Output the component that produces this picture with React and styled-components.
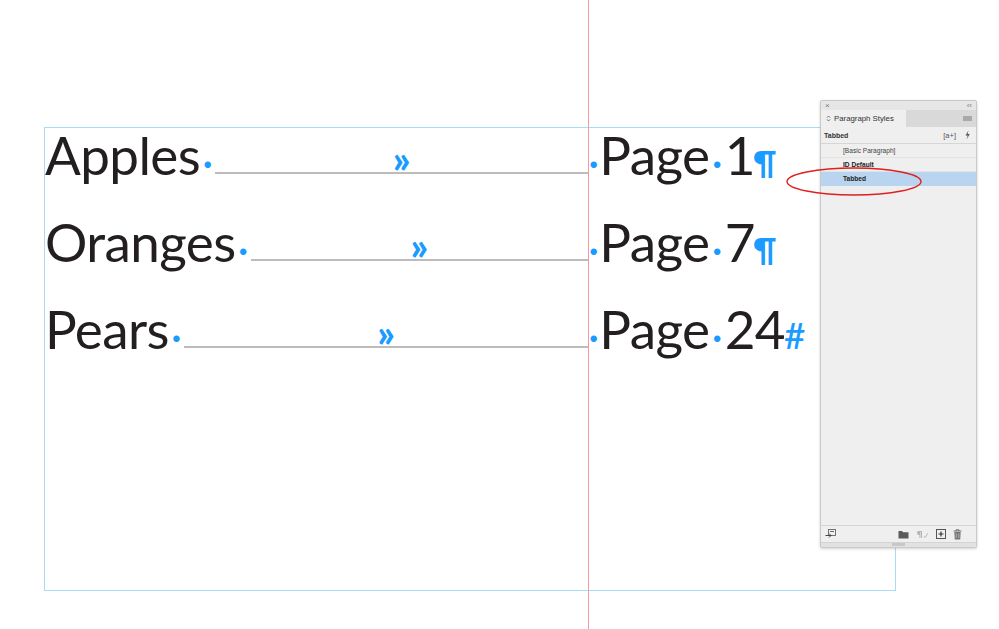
import styled, { createGlobalStyle } from "styled-components";

const GlobalStyle = createGlobalStyle`
  html, body {
    margin: 0;
    padding: 0;
    background: #ffffff;
  }
`;

const colors = {
  ink: "#231f20",
  hidden: "#1a9bff",
  frame: "#a8dcf5",
  guide: "#f39a9a",
  leader: "#bcbcbc",
  panelBg: "#efefef",
  panelLine: "#d6d6d6",
  select: "#b9d4ef",
};

const Canvas = styled.div`
  position: relative;
  width: 999px;
  height: 629px;
  overflow: hidden;
  padding: 127px 0 0 44px;
  box-sizing: border-box;
  font-family: "Lato", "Open Sans", sans-serif;
`;

const TextFrame = styled.div`
  width: 852px;
  height: 464px;
  box-sizing: border-box;
  border: 1px solid ${colors.frame};
`;

const Row = styled.div`
  display: flex;
  align-items: baseline;
  height: 87px;
  line-height: 87px;
  margin-top: ${(p) => (p.$first ? "-17px" : "0")};
  font-size: 53px;
  color: ${colors.ink};
`;

const LeftCell = styled.div`
  width: 543px;
  display: flex;
  align-items: baseline;
`;

const Word = styled.span`
  letter-spacing: -0.6px;
`;

const Space = styled.span`
  color: ${colors.hidden};
  font-weight: 700;
  font-size: 34px;
  padding: 0 ${(p) => (p.$tight ? "1px" : "3px")};
`;

const Leader = styled.span`
  flex: 1;
  height: 2px;
  background: ${colors.leader};
  position: relative;
  transform: translateY(-1px);
`;

const Chevron = styled.span`
  position: absolute;
  left: 50%;
  bottom: 6px;
  transform: translateX(-50%);
  color: ${colors.hidden};
  font-weight: 900;
  font-size: 38px;
  line-height: 20px;
`;

const RightCell = styled.div`
  display: flex;
  align-items: baseline;
`;

const Pilcrow = styled.span`
  color: ${colors.hidden};
  font-weight: 700;
  font-size: 32px;
  margin-left: -2px;
`;

const StoryEnd = styled.span`
  color: ${colors.hidden};
  font-weight: 500;
  font-size: 37px;
  margin-left: -1px;
`;

const Guide = styled.div`
  position: absolute;
  left: 588px;
  top: 0;
  width: 1px;
  height: 629px;
  background: ${colors.guide};
`;

/* Paragraph Styles panel */
const Panel = styled.div`
  position: absolute;
  left: 820px;
  top: 100px;
  width: 157px;
  height: 448px;
  box-sizing: border-box;
  border: 1px solid #c9c9c9;
  border-radius: 2px;
  box-shadow: 0 1px 3px rgba(0, 0, 0, 0.18);
  background: ${colors.panelBg};
  display: flex;
  flex-direction: column;
  font-family: "Liberation Sans", Arial, sans-serif;
  color: #333;
  overflow: hidden;
`;

const TitleBar = styled.div`
  height: 9px;
  background: #e6e6e6;
  display: flex;
  align-items: center;
  justify-content: space-between;
  padding: 0 4px;
  font-size: 8px;
  color: #777;
`;

const TabRow = styled.div`
  height: 17px;
  background: #d9d9d9;
  display: flex;
  align-items: stretch;
  justify-content: space-between;
`;

const Tab = styled.div`
  width: 80px;
  background: ${colors.panelBg};
  display: flex;
  align-items: center;
  gap: 3px;
  padding-left: 5px;
  font-size: 7.8px;
  color: #333;
`;

const MenuIcon = styled.div`
  width: 9px;
  height: 5px;
  background: #a9a9a9;
  align-self: center;
  margin-right: 4px;
`;

const StyleHeader = styled.div`
  height: 16px;
  display: flex;
  align-items: center;
  justify-content: space-between;
  padding: 0 3px;
  border-bottom: 1px solid ${colors.panelLine};
  font-size: 7px;
  font-weight: 700;
  color: #333;
`;

const HeaderTools = styled.div`
  display: flex;
  align-items: center;
  gap: 8px;
  font-weight: 400;
  font-size: 7.5px;
  color: #555;
  padding-right: 2px;
`;

const List = styled.div`
  flex: 1;
  display: flex;
  flex-direction: column;
`;

const Item = styled.div`
  height: 14px;
  box-sizing: border-box;
  display: flex;
  align-items: center;
  padding-left: 22px;
  font-size: 6.6px;
  font-weight: ${(p) => (p.$bold ? 700 : 400)};
  color: ${(p) => (p.$bold ? "#222" : "#444")};
  background: ${(p) => (p.$selected ? colors.select : "transparent")};
  border-bottom: 1px solid ${(p) => (p.$selected ? "transparent" : "#e4e4e4")};
`;

const Footer = styled.div`
  height: 16px;
  border-top: 1px solid ${colors.panelLine};
  display: flex;
  align-items: center;
  padding: 0 14px 0 4px;
  gap: 7px;
`;

const FooterSpacer = styled.div`
  flex: 1;
`;

const Grip = styled.div`
  height: 4px;
  background: #e2e2e2;
  border-top: 1px solid #d4d4d4;
  display: flex;
  justify-content: center;
`;

const GripHandle = styled.div`
  width: 13px;
  height: 3px;
  background: #c8c8c8;
`;

const Marker = styled.svg`
  position: absolute;
  left: 785px;
  top: 166px;
  overflow: visible;
`;

const Ico = ({ children, w = 10, h = 10 }) => (
  <svg width={w} height={h} viewBox={`0 0 ${w} ${h}`}>
    {children}
  </svg>
);

const rows = [
  { word: "Apples", page: "1", end: "pilcrow" },
  { word: "Oranges", page: "7", end: "pilcrow" },
  { word: "Pears", page: "24", end: "story" },
];

export default function App() {
  return (
    <>
      <GlobalStyle />
      <Canvas>
        <TextFrame>
          {rows.map((r, i) => (
            <Row key={r.word} $first={i === 0}>
              <LeftCell>
                <Word>{r.word}</Word>
                <Space>·</Space>
                <Leader>
                  <Chevron>»</Chevron>
                </Leader>
              </LeftCell>
              <RightCell>
                <Space $tight>·</Space>
                <Word>Page</Word>
                <Space>·</Space>
                <Word>{r.page}</Word>
                {r.end === "pilcrow" ? <Pilcrow>¶</Pilcrow> : <StoryEnd>#</StoryEnd>}
              </RightCell>
            </Row>
          ))}
        </TextFrame>
        <Guide />

        <Panel>
          <TitleBar>
            <span>×</span>
            <span>‹‹</span>
          </TitleBar>
          <TabRow>
            <Tab>
              <Ico w={5} h={7}>
                <path d="M1 2.6 L2.5 1 L4 2.6 M1 4.4 L2.5 6 L4 4.4" fill="none" stroke="#555" strokeWidth="0.8" />
              </Ico>
              Paragraph Styles
            </Tab>
            <MenuIcon />
          </TabRow>
          <StyleHeader>
            <span>Tabbed</span>
            <HeaderTools>
              <span>[a+]</span>
              <Ico w={7} h={10}>
                <path d="M4.5 0.5 L1.5 5.5 L3.8 5.5 L2.5 9.5 L5.8 4 L3.6 4 Z" fill="#555" />
              </Ico>
            </HeaderTools>
          </StyleHeader>
          <List>
            <Item>[Basic Paragraph]</Item>
            <Item $bold>ID Default</Item>
            <Item $bold $selected>Tabbed</Item>
          </List>
          <Footer>
            <Ico w={11} h={10}>
              <rect x="3.5" y="0.5" width="7" height="6" fill="none" stroke="#666" strokeWidth="0.9" />
              <path d="M0.5 6.5 L6 6.5 M4 4.5 L6 6.5 L4 8.5" fill="none" stroke="#444" strokeWidth="1" />
              <rect x="5" y="2" width="4" height="1" fill="#666" />
            </Ico>
            <FooterSpacer />
            <Ico w={11} h={9}>
              <path d="M0.5 1 L4 1 L5 2.2 L10.5 2.2 L10.5 8.5 L0.5 8.5 Z" fill="#5a5a5a" />
            </Ico>
            <Ico w={13} h={9}>
              <path d="M2 1 L6 1 L6 8 L5 8 L5 2 L4.4 2 L4.4 8 L3.4 8 L3.4 5 C1.6 5 1 4 1 3 C1 2 1.6 1 2 1 Z" fill="#b5b5b5" />
              <path d="M8 6 L9.2 7.5 L12 3" fill="none" stroke="#b5b5b5" strokeWidth="0.9" />
            </Ico>
            <Ico w={10} h={10}>
              <rect x="0.5" y="0.5" width="9" height="9" fill="none" stroke="#555" strokeWidth="1" />
              <path d="M5 2.5 L5 7.5 M2.5 5 L7.5 5" stroke="#333" strokeWidth="1.2" />
            </Ico>
            <Ico w={9} h={11}>
              <path d="M0.5 2 L8.5 2 M3 2 L3 0.8 L6 0.8 L6 2" fill="none" stroke="#666" strokeWidth="0.9" />
              <path d="M1.3 3 L7.7 3 L7.2 10.5 L1.8 10.5 Z" fill="#777" />
              <path d="M3.2 4.5 L3.2 9 M5.8 4.5 L5.8 9" stroke="#ccc" strokeWidth="0.7" />
            </Ico>
          </Footer>
          <Grip>
            <GripHandle />
          </Grip>
        </Panel>

        <Marker width="140" height="32">
          <ellipse cx="69" cy="15.5" rx="67" ry="13.5" fill="none" stroke="#e02020" strokeWidth="1.4" />
        </Marker>
      </Canvas>
    </>
  );
}
